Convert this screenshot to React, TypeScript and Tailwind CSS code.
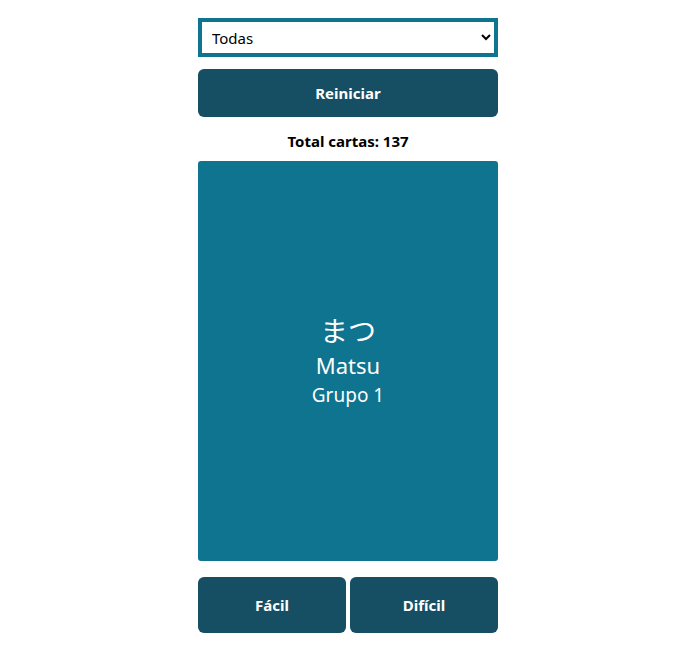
import { useState } from 'react'

export default function App() {
  const [group, setGroup] = useState('Todas')

  return (
    <div className="min-h-screen bg-white flex justify-center pl-[5px]" style={{ fontFamily: '"Noto Sans", "Open Sans", "Noto Sans CJK JP", sans-serif' }}>
      <div className="w-[300px] pt-[18px] flex flex-col">
        {/* Filter */}
        <select
          value={group}
          onChange={(e) => setGroup(e.target.value)}
          className="h-[39px] w-full border-4 border-[#0e7490] bg-white pl-[6px] pr-1 text-[15px] text-black"
        >
          <option>Todas</option>
          <option>Grupo 1</option>
          <option>Grupo 2</option>
        </select>

        <button className="mt-3 h-12 w-full rounded-md bg-[#164e63] text-[15px] font-bold text-white">
          Reiniciar
        </button>

        <div className="mt-3 text-center text-[15px] font-bold text-black leading-6">Total cartas: 137</div>

        {/* Card */}
        <div className="mt-2 flex h-[400px] w-full flex-col items-center justify-center rounded-[3px] bg-[#0e7490] text-white">
          <div className="text-[28px] leading-9">まつ</div>
          <div className="text-[22px] leading-8">Matsu</div>
          <div className="text-[19px] leading-7">Grupo 1</div>
        </div>

        <div className="mt-4 flex gap-1">
          <button className="h-14 flex-1 rounded-md bg-[#164e63] text-[15px] font-bold text-white">Fácil</button>
          <button className="h-14 flex-1 rounded-md bg-[#164e63] text-[15px] font-bold text-white">Difícil</button>
        </div>
      </div>
    </div>
  )
}
